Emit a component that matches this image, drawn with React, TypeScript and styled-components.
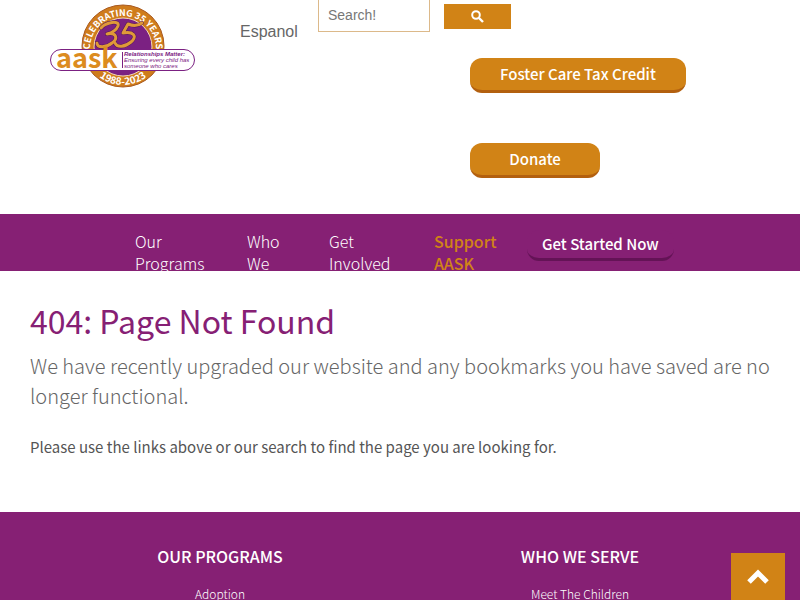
import React from 'react';
import styled, { createGlobalStyle, css } from 'styled-components';

const purple = '#862074';
const orange = '#d18316';

const GlobalStyle = createGlobalStyle`
  *, *::before, *::after { box-sizing: border-box; }
  body {
    margin: 0;
    background: #fff;
    color: #444;
    font-family: "Source Sans Pro", "Noto Sans CJK SC", sans-serif;
  }
  a { text-decoration: none; }
`;

const Header = styled.header`
  display: grid;
  grid-template-columns: 190px 230px 1fr;
  grid-template-rows: 58px 1fr;
  min-height: 214px;
  padding-left: 50px;
`;

const LogoLink = styled.a`
  grid-row: 1 / 3;
  padding-top: 4px;
  svg { display: block; }
`;

const Tools = styled.div`
  grid-column: 2 / 4;
  display: flex;
  align-items: flex-start;
`;

const Language = styled.a`
  width: 78px;
  padding-top: 20px;
  color: #666;
  font: 16px/24px "Liberation Sans", Arial, sans-serif;
`;

const SearchForm = styled.form`
  display: flex;
  align-items: flex-start;
  gap: 14px;
`;

const SearchInput = styled.input`
  width: 112px;
  height: 32px;
  padding: 0 9px 2px;
  border: 1px solid #dcb98a;
  border-top: 0;
  background: #fff;
  color: #444;
  font: 14px/20px "Liberation Sans", Arial, sans-serif;
  &::placeholder { color: #777; opacity: 1; }
`;

const SearchButton = styled.button`
  display: flex;
  align-items: center;
  justify-content: center;
  width: 67px;
  height: 25px;
  margin-top: 4px;
  padding: 0;
  border: 0;
  background: ${orange};
`;

const Actions = styled.div`
  grid-column: 3;
  display: flex;
  flex-direction: column;
  align-items: flex-start;
  gap: 50px;
`;

const Pill = styled.a<{ $tone: 'orange' | 'purple' }>`
  display: block;
  border-radius: 12px;
  color: #fff;
  font-size: 15px;
  font-weight: 500;
  text-align: center;
  white-space: nowrap;
  ${({ $tone }) =>
    $tone === 'orange'
      ? css`
          min-width: 130px;
          padding: 0 30px;
          line-height: 32px;
          background: ${orange};
          border-bottom: 3px solid #b3600f;
        `
      : css`
          padding: 0 15px;
          line-height: 28px;
          background: ${purple};
          border-bottom: 3px solid #641356;
        `}
`;

const Nav = styled.nav`
  height: 57px;
  overflow: hidden;
  background: ${purple};
`;

const NavList = styled.ul`
  display: flex;
  align-items: flex-start;
  margin: 0;
  padding: 16px 0 0 135px;
  list-style: none;
`;

const NavItem = styled.li<{ $width: number }>`
  flex: 0 0 ${({ $width }) => $width}px;
`;

const NavLink = styled.a<{ $strong?: boolean }>`
  display: block;
  width: min-content;
  color: ${({ $strong }) => ($strong ? orange : '#fff')};
  font-size: 16px;
  font-weight: ${({ $strong }) => ($strong ? 500 : 300)};
  line-height: 22px;
`;

const Main = styled.main`
  padding: 28px 30px 53px;
`;

const Title = styled.h1`
  margin: 0;
  color: ${purple};
  font-size: 32px;
  font-weight: 400;
  line-height: 42px;
`;

const Lead = styled.p`
  margin: 10px 0 24px;
  color: #666;
  font-size: 20px;
  font-weight: 300;
  line-height: 30px;
`;

const Text = styled.p`
  margin: 0;
  color: #555;
  font-size: 15px;
  line-height: 24px;
`;

const Footer = styled.footer`
  display: grid;
  grid-template-columns: 1fr 1fr;
  padding: 32px 40px 0;
  background: ${purple};
  color: #fff;
  text-align: center;
`;

const FooterTitle = styled.h2`
  margin: 0 0 14px;
  font-size: 16px;
  font-weight: 500;
  line-height: 24px;
`;

const FooterLink = styled.a`
  display: block;
  color: #fff;
  font-size: 12px;
  font-weight: 300;
  line-height: 24px;
`;

const BackToTop = styled.button`
  position: fixed;
  right: 15px;
  bottom: 0;
  display: flex;
  align-items: center;
  justify-content: center;
  width: 54px;
  height: 47px;
  padding: 0;
  border: 0;
  background: ${orange};
`;

const three = 'M51 24 C56 18 70 16 68 22 C66 27 61 29 57 30 C67 28 68 35 62 39 C56 44 47 44 47 39';
const five = 'M78 20 L73 29 C83 27 88 32 81 38 C75 43 67 44 65 39 M78 20 C83 22 88 22 92 19';

function Logo() {
  return (
    <svg width="146" height="85" viewBox="0 0 146 85" role="img" aria-label="AASK, celebrating 35 years">
      <defs>
        <path id="arcTop" d="M40 45 A33 33 0 1 1 106 45" />
        <path id="arcBottom" d="M34 42 A39 39 0 0 0 112 42" />
      </defs>
      <circle cx="73" cy="42" r="41" fill="#cf7c1c" stroke="#a9591f" />
      <circle cx="73" cy="43" r="29" fill="#7b2182" stroke="#f3d9b8" strokeWidth="1" />
      <g fill="#fff" fontFamily="Noto Sans CJK SC, sans-serif" fontWeight="700" textAnchor="middle">
        <text fontSize="9"><textPath href="#arcTop" startOffset="50%">CELEBRATING 35 YEARS</textPath></text>
        <text fontSize="10"><textPath href="#arcBottom" startOffset="50%">1988-2023</textPath></text>
      </g>
      <g fill="none" strokeLinecap="round" strokeLinejoin="round">
        <g stroke="#4f1458" strokeWidth="4">
          <path d={three} />
          <path d={five} />
        </g>
        <g stroke="#df9938" strokeWidth="3">
          <path d={three} />
          <path d={five} />
        </g>
      </g>
      <rect x="0.500" y="45.500" width="144" height="21" rx="10.500" fill="#fff" stroke="#7b2182" />
      <text x="6" y="64" fill="#dc8c20" fontFamily="Noto Sans CJK SC, sans-serif" fontWeight="700" fontSize="27">aask</text>
      <path d="M72.500 48 V64" stroke="#7b2182" />
      <g fill="#7b2182" fontFamily="Liberation Sans, sans-serif" fontStyle="italic" fontSize="6">
        <text x="74" y="52" fontWeight="700">Relationships Matter:</text>
        <text x="74" y="58">Ensuring every child has</text>
        <text x="74" y="64">someone who cares</text>
      </g>
    </svg>
  );
}

const navItems = [
  { label: 'Our Programs', width: 112 },
  { label: 'Who We Serve', width: 82 },
  { label: 'Get Involved', width: 105 },
  { label: 'Support AASK', width: 93, strong: true },
];

const footerColumns = [
  { title: 'OUR PROGRAMS', link: 'Adoption' },
  { title: 'WHO WE SERVE', link: 'Meet The Children' },
];

export default function App() {
  return (
    <>
      <GlobalStyle />
      <Header>
        <LogoLink href="#"><Logo /></LogoLink>
        <Tools>
          <Language href="#">Espanol</Language>
          <SearchForm role="search" onSubmit={(e) => e.preventDefault()}>
            <SearchInput type="text" placeholder="Search!" aria-label="Search" />
            <SearchButton type="submit" aria-label="Search">
              <svg width="13" height="13" viewBox="0 0 13 13" fill="none" stroke="#fff">
                <circle cx="5" cy="5" r="3.800" strokeWidth="2" />
                <path d="M8 8 L12 12" strokeWidth="2.400" />
              </svg>
            </SearchButton>
          </SearchForm>
        </Tools>
        <Actions>
          <Pill $tone="orange" href="#">Foster Care Tax Credit</Pill>
          <Pill $tone="orange" href="#">Donate</Pill>
        </Actions>
      </Header>
      <Nav>
        <NavList>
          {navItems.map((item) => (
            <NavItem key={item.label} $width={item.width}>
              <NavLink href="#" $strong={item.strong}>{item.label}</NavLink>
            </NavItem>
          ))}
          <li><Pill $tone="purple" href="#">Get Started Now</Pill></li>
        </NavList>
      </Nav>
      <Main>
        <Title>404: Page Not Found</Title>
        <Lead>
          We have recently upgraded our website and any bookmarks you have saved are no longer functional.
        </Lead>
        <Text>Please use the links above or our search to find the page you are looking for.</Text>
      </Main>
      <Footer>
        {footerColumns.map((column) => (
          <section key={column.title}>
            <FooterTitle>{column.title}</FooterTitle>
            <FooterLink href="#">{column.link}</FooterLink>
          </section>
        ))}
      </Footer>
      <BackToTop type="button" aria-label="Back to top">
        <svg width="22" height="16" viewBox="0 0 22 16" fill="none" stroke="#fff" strokeWidth="5">
          <path d="M2 13 L11 4 L20 13" />
        </svg>
      </BackToTop>
    </>
  );
}
